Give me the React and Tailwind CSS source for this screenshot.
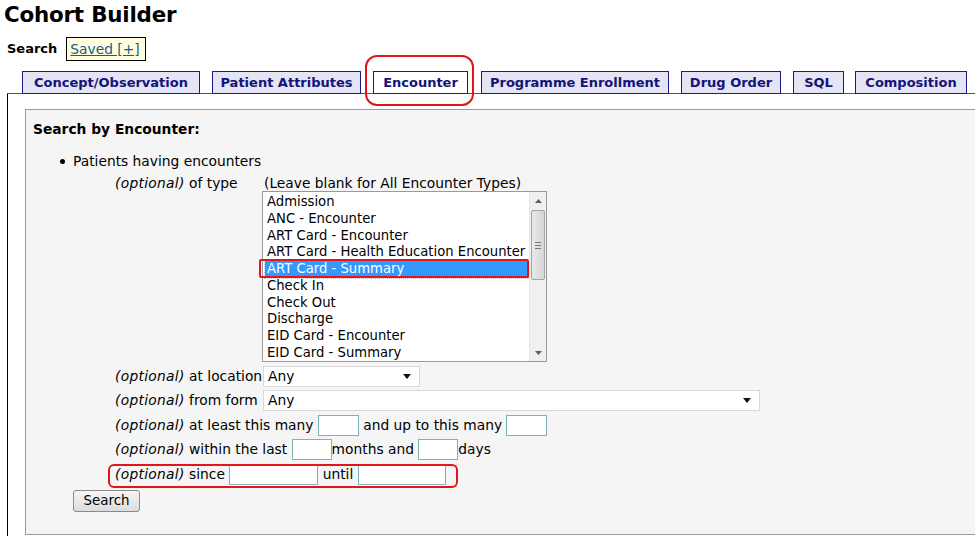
import React from 'react';

const tabs = [
  { label: 'Concept/Observation', w: 'w-[178px]', ml: 'ml-[15px]' },
  { label: 'Patient Attributes', w: 'w-[149px]', ml: 'ml-[12px]' },
  { label: 'Encounter', w: 'w-[95px]', ml: 'ml-[12px]', active: true },
  { label: 'Programme Enrollment', w: 'w-[188px]', ml: 'ml-[13px]' },
  { label: 'Drug Order', w: 'w-[100px]', ml: 'ml-[12px]' },
  { label: 'SQL', w: 'w-[51px]', ml: 'ml-[12px]' },
  { label: 'Composition', w: 'w-[112px]', ml: 'ml-[11px]' },
];

const encounterTypes = [
  'Admission',
  'ANC - Encounter',
  'ART Card - Encounter',
  'ART Card - Health Education Encounter',
  'ART Card - Summary',
  'Check In',
  'Check Out',
  'Discharge',
  'EID Card - Encounter',
  'EID Card - Summary',
];

const Caret = () => (
  <svg width="8" height="5" viewBox="0 0 8 5" className="shrink-0">
    <path d="M0 0 H8 L4 5 Z" fill="#111" />
  </svg>
);

const FakeSelect = ({ width }) => (
  <div className={`${width} h-[21px] bg-white border border-[#d9d9d9] flex items-center justify-between pl-[4px] pr-[8px]`}>
    <span>Any</span>
    <Caret />
  </div>
);

const TextBox = ({ width }) => (
  <span className={`inline-block ${width} h-[21px] bg-white border border-[#7fb2b2] align-middle shrink-0`} />
);

const Optional = () => <i className="tracking-[0.3px]">(optional)</i>;

const ListBox = () => (
  <div className="relative w-[285px] h-[171px] bg-white border border-[#9a9a9a] flex text-[13.2px]">
    <div className="flex-1 pt-[2px] pl-[3px]">
      {encounterTypes.map((t, i) => (
        <div
          key={t}
          className={`h-[16.75px] leading-[16.75px] pl-[1px] whitespace-nowrap ${
            i === 4 ? 'bg-[#3399ff] text-white -ml-[1px] pl-[2px] outline-1 outline-dotted outline-[#9cc]' : ''
          }`}
        >
          {t}
        </div>
      ))}
    </div>
    {/* scrollbar */}
    <div className="w-[17px] h-full bg-[#f0f0f0] border-l border-[#e6e6e6] flex flex-col items-center">
      <div className="h-[17px] flex items-center justify-center">
        <svg width="7" height="4" viewBox="0 0 7 4"><path d="M0 4 L3.5 0 L7 4 Z" fill="#606060" /></svg>
      </div>
      <div className="mt-[1px] w-[14px] h-[70px] rounded-[2px] border border-[#a5a5a5] bg-gradient-to-r from-[#e9e9e9] to-[#d6d6d6] flex flex-col items-center justify-center gap-[2px]">
        <div className="w-[6px] h-px bg-[#777]" />
        <div className="w-[6px] h-px bg-[#777]" />
        <div className="w-[6px] h-px bg-[#777]" />
      </div>
      <div className="flex-1" />
      <div className="h-[17px] flex items-center justify-center">
        <svg width="7" height="4" viewBox="0 0 7 4"><path d="M0 0 L7 0 L3.5 4 Z" fill="#606060" /></svg>
      </div>
    </div>
  </div>
);

export default function App() {
  return (
    <div className="relative w-[975px] h-[536px] overflow-hidden bg-white text-black font-['DejaVu_Sans','Verdana',sans-serif] text-[13.8px]">
      <h1 className="pl-[4px] pt-[2px] text-[21.4px] font-bold leading-[26px] tracking-[-0.2px]">Cohort Builder</h1>

      <div className="flex items-center mt-[9px] pl-[7px] h-[24px]">
        <span className="font-bold text-[13px]">Search</span>
        <span className="ml-[9px] h-[24px] w-[80px] px-[3px] bg-[#ffffe0] border border-black flex items-center">
          <span className="underline text-[#1a5a8a]">Saved [+]</span>
        </span>
      </div>

      {/* tab bar */}
      <div className="mt-[10px] ml-[7px] flex items-end border-b border-[#4c4ca6] h-[23px]">
        {tabs.map((t) => (
          <div
            key={t.label}
            className={`${t.w} ${t.ml} shrink-0 h-[23px] -mb-px flex items-center justify-center border border-[#1b1b8c] font-bold text-[13px] text-[#13137a] whitespace-nowrap ${
              t.active ? 'bg-white' : 'bg-[#e4e4f4]'
            }`}
          >
            {t.label}
          </div>
        ))}
      </div>

      {/* content */}
      <div className="ml-[7px] border-l border-black h-[460px] pt-[15px] pl-[17px]">
        <div className="w-[980px] h-[426px] border border-[#9a9a9a] bg-[#f5f5f5] pl-[7px] pt-[11px]">
          <div className="font-bold leading-[16px]">Search by Encounter:</div>

          <ul className="mt-[16px] pl-[27px]">
            <li className="flex items-center leading-[16px]">
              <span className="w-[5px] h-[5px] rounded-full bg-black mr-[8px]" />
              Patients having encounters
            </li>
          </ul>

          <div className="pl-[82px] mt-[5px]">
            <div className="flex">
              <div className="w-[148px] leading-[16px] pt-[1px]">
                <Optional /> of type
              </div>
              <div className="flex flex-col">
                <div className="leading-[16px] pt-[1px] pl-[1px] whitespace-nowrap">(Leave blank for All Encounter Types)</div>
                <div className="-ml-px">
                  <ListBox />
                </div>
              </div>
            </div>

            <div className="mt-[2px] flex items-center h-[24.5px]">
              <span className="w-[148px] whitespace-nowrap"><Optional /> at location</span>
              <FakeSelect width="w-[157px]" />
            </div>
            <div className="flex items-center h-[24.5px]">
              <span className="w-[148px] whitespace-nowrap"><Optional /> from form</span>
              <FakeSelect width="w-[497px]" />
            </div>
            <div className="flex items-center h-[24.5px] whitespace-nowrap">
              <Optional />&nbsp;at least this many&nbsp;<TextBox width="w-[41px]" />&nbsp;and up to this many&nbsp;<TextBox width="w-[41px]" />
            </div>
            <div className="flex items-center h-[24.5px] whitespace-nowrap">
              <Optional />&nbsp;within the last&nbsp;<TextBox width="w-[40px]" />months and&nbsp;<TextBox width="w-[40px]" />days
            </div>
            <div className="flex items-center h-[24.5px] whitespace-nowrap">
              <Optional />&nbsp;since&nbsp;<TextBox width="w-[89px]" />&nbsp;until&nbsp;<TextBox width="w-[88px]" />
            </div>
          </div>

          <div className="pl-[40px] mt-[3px]">
            <button className="h-[22px] w-[67px] rounded-[3px] border border-[#8a8a8a] bg-gradient-to-b from-[#f6f6f6] to-[#dcdcdc] text-[13.4px] leading-none">
              Search
            </button>
          </div>
        </div>
      </div>

      {/* red annotation marks */}
      <div className="absolute left-[365px] top-[55px] w-[109px] h-[51px] rounded-[12px] border-2 border-[#e3141b] pointer-events-none" />
      <div className="absolute left-[259px] top-[259px] w-[270px] h-[19px] rounded-[2px] border-2 border-[#e3141b] pointer-events-none" />
      <div className="absolute left-[108px] top-[464px] w-[350px] h-[24px] rounded-[6px] border-2 border-[#e3141b] pointer-events-none" />
    </div>
  );
}
